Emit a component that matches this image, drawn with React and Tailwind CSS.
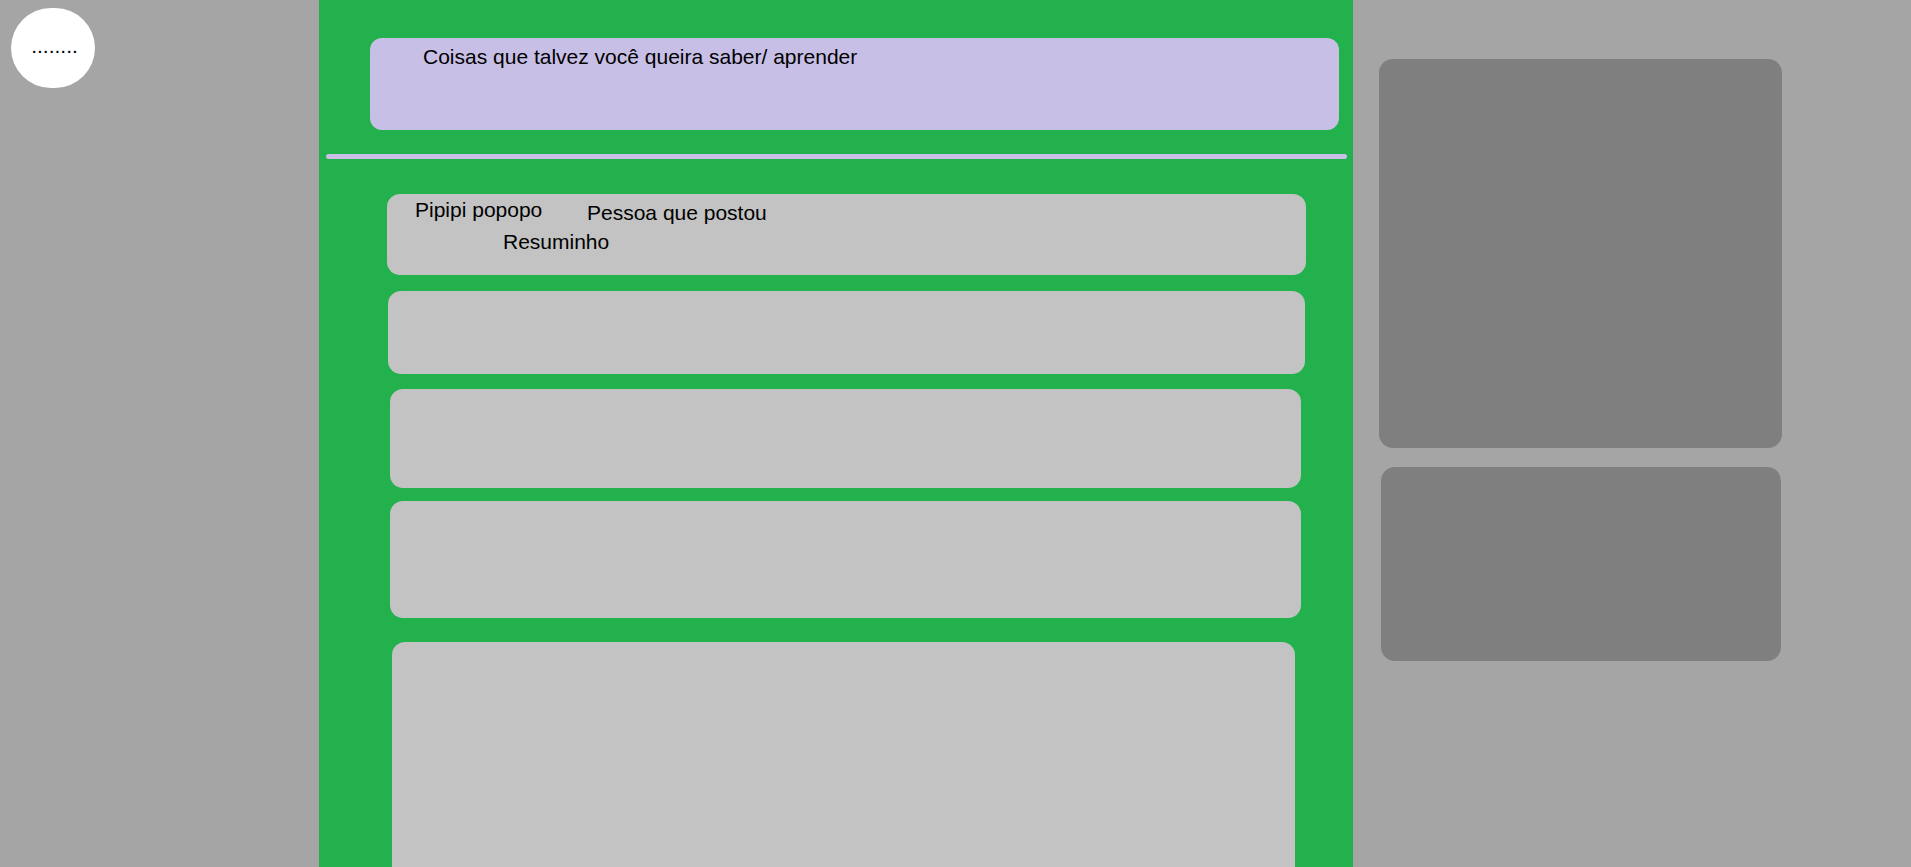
import React from 'react';

function Post({ className, children }) {
    return <div className={`bg-[#c3c3c3] rounded-[13px] shrink-0 ${className}`}>{children}</div>;
}

export default function App() {
    return (
        <div className="h-screen w-full overflow-hidden flex bg-[#a5a5a5] text-black font-['Liberation_Sans',Arial,sans-serif] text-[21px] leading-[1.15]">
            {/* coluna esquerda */}
            <aside className="w-[319px] shrink-0">
                <div className="mt-[8px] ml-[11px] w-[84px] h-[80px] rounded-full bg-white flex items-center justify-center">
                    <span className="leading-none pb-[6px] pl-[3px]">........</span>
                </div>
            </aside>

            {/* feed */}
            <main className="w-[1034px] shrink-0 bg-[#22b14c] flex flex-col pt-[38px]">
                <div className="shrink-0 ml-[51px] w-[969px] h-[92px] rounded-[12px] bg-[#c8bfe7] pl-[53px] pt-[7px]">
                    Coisas que talvez você queira saber/ aprender
                </div>

                <div className="shrink-0 mt-[24px] ml-[7px] w-[1021px] h-[5px] rounded-full bg-[#c8bfe7]" />

                <Post className="mt-[35px] ml-[68px] w-[919px] h-[81px] pt-[4px]">
                    <div className="flex items-start">
                        <span className="pl-[28px] w-[200px] shrink-0">Pipipi popopo</span>
                        <span className="mt-[3px]">Pessoa que postou</span>
                    </div>
                    <div className="pl-[116px] mt-[5px]">Resuminho</div>
                </Post>
                <Post className="mt-[16px] ml-[69px] w-[917px] h-[83px]" />
                <Post className="mt-[15px] ml-[71px] w-[911px] h-[99px]" />
                <Post className="mt-[13px] ml-[71px] w-[911px] h-[117px]" />
                <Post className="mt-[24px] ml-[73px] w-[903px] h-[300px]" />
            </main>

            {/* coluna direita */}
            <aside className="flex-1 flex flex-col pt-[59px]">
                <div className="shrink-0 ml-[26px] w-[403px] h-[389px] rounded-[14px] bg-[#7f7f7f]" />
                <div className="shrink-0 mt-[19px] ml-[28px] w-[400px] h-[194px] rounded-[14px] bg-[#7f7f7f]" />
            </aside>
        </div>
    );
}
